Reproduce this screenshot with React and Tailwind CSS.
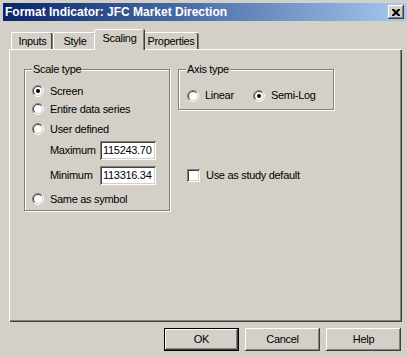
import React from "react";

const raised =
  "shadow-[inset_-1px_-1px_0_#404040,inset_1px_1px_0_#ffffff,inset_-2px_-2px_0_#808080]";
const sunken =
  "shadow-[inset_1px_1px_0_#808080,inset_-1px_-1px_0_#ffffff,inset_2px_2px_0_#404040,inset_-2px_-2px_0_#d4d0c8]";

function Radio({ checked }) {
  return (
    <svg width="12" height="12" viewBox="0 0 12 12" className="shrink-0">
      <circle cx="6" cy="6" r="4.5" fill="#ffffff" />
      <path d="M2.1 9.9 A5.5 5.5 0 0 1 9.9 2.1" fill="none" stroke="#808080" strokeWidth="1" />
      <path d="M9.9 2.1 A5.5 5.5 0 0 1 2.1 9.9" fill="none" stroke="#ffffff" strokeWidth="1" />
      <path d="M2.8 9.2 A4.5 4.5 0 0 1 9.2 2.8" fill="none" stroke="#404040" strokeWidth="1" />
      <path d="M9.2 2.8 A4.5 4.5 0 0 1 2.8 9.2" fill="none" stroke="#d4d0c8" strokeWidth="1" />
      {checked && <circle cx="6" cy="6" r="2" fill="#000000" />}
    </svg>
  );
}

function Option({ checked, label, className = "" }) {
  return (
    <div className={`flex items-center ${className}`}>
      <Radio checked={checked} />
      <span className="ml-[6px]">{label}</span>
    </div>
  );
}

function Group({ label, className = "", children }) {
  return (
    <div
      className={`relative border border-[#808080] shadow-[inset_1px_1px_0_#ffffff,1px_1px_0_#ffffff] ${className}`}
    >
      <span className="absolute left-[7px] top-[-8px] bg-[#d4d0c8] px-[1px] leading-[14px]">
        {label}
      </span>
      {children}
    </div>
  );
}

function Field({ label, value, className = "" }) {
  return (
    <div className={`flex items-center ${className}`}>
      <span className="w-[50px] ml-[25px]">{label}</span>
      <div className={`w-[56px] h-[19px] bg-white pl-[3px] pt-[3px] leading-[13px] ${sunken}`}>
        {value}
      </div>
    </div>
  );
}

function Tab({ label, active, className = "" }) {
  if (active) {
    return (
      <div
        className={`relative z-10 -mx-[2px] h-[21px] mb-[-1px] bg-[#d4d0c8] rounded-t-[2px] border-t border-l border-white shadow-[inset_-1px_0_0_#808080,1px_0_0_#404040] flex items-start justify-center pt-[2px] ${className}`}
      >
        {label}
      </div>
    );
  }
  return (
    <div
      className={`h-[17px] bg-[#d4d0c8] rounded-t-[2px] border-t border-l border-white shadow-[inset_-1px_0_0_#808080,inset_-2px_0_0_#404040] flex items-start justify-center pt-[2px] ${className}`}
    >
      {label}
    </div>
  );
}

function Button({ label, primary }) {
  const inner = (
    <div className={`w-full h-full flex items-center justify-center bg-[#d4d0c8] ${raised}`}>
      {label}
    </div>
  );
  return primary ? (
    <div className="w-[75px] h-[23px] border border-black">{inner}</div>
  ) : (
    <div className="w-[75px] h-[23px]">{inner}</div>
  );
}

export default function App() {
  return (
    <div className="w-[407px] h-[357px] overflow-hidden bg-[#d4d0c8] pl-[3px] pt-[3px] text-[11px] tracking-[-0.3px] text-black font-['Liberation_Sans',Arial,sans-serif] leading-[13px]">
      {/* title bar */}
      <div className="h-[18px] flex items-center bg-gradient-to-r from-[#0a246a] to-[#a6caf0] pl-[2px] pr-[3px]">
        <span className="flex-1 text-white font-bold text-[12px] tracking-normal">
          Format Indicator: JFC Market Direction
        </span>
        <div className={`w-[16px] h-[14px] bg-[#d4d0c8] flex items-center justify-center ${raised}`}>
          <svg width="8" height="7" viewBox="0 0 8 7">
            <path d="M0 0h2l2 2 2-2h2v1l-2.5 2.5L8 6v1H6L4 5 2 7H0V6l2.5-2.5L0 1z" fill="#000000" />
          </svg>
        </div>
      </div>

      {/* tabs */}
      <div className="flex items-end h-[28px] ml-[8px]">
        <Tab label="Inputs" className="w-[42px]" />
        <Tab label="Style" className="w-[43px]" />
        <Tab label="Scaling" active className="w-[50px]" />
        <Tab label="Properties" className="w-[57px]" />
      </div>

      {/* panel */}
      <div className="ml-[6px] w-[392px] h-[272px] border-t border-l border-white shadow-[inset_-1px_-1px_0_#808080,1px_1px_0_#404040] flex items-start pt-[19px] pl-[14px]">
        <Group label="Scale type" className="w-[146px] h-[142px] pt-[13px] pl-[7px]">
          <Option checked label="Screen" className="h-[16px]" />
          <Option label="Entire data series" className="h-[20px]" />
          <Option label="User defined" className="h-[20px]" />
          <Field label="Maximum" value="115243.70" className="h-[23px] -ml-[7px]" />
          <Field label="Minimum" value="113316.34" className="h-[27px] -ml-[7px]" />
          <Option label="Same as symbol" className="h-[20px]" />
        </Group>

        <div className="ml-[8px] flex flex-col">
          <Group label="Axis type" className="w-[156px] h-[41px] pl-[8px] pt-[19px]">
            <div className="flex">
              <Option label="Linear" className="w-[66px]" />
              <Option checked label="Semi-Log" />
            </div>
          </Group>
          <div className="mt-[59px] ml-[9px] flex items-center">
            <div className={`w-[13px] h-[13px] bg-white ${sunken}`} />
            <span className="ml-[6px]">Use as study default</span>
          </div>
        </div>
      </div>

      {/* buttons */}
      <div className="mt-[7px] w-[398px] flex justify-end gap-[6px]">
        <Button label="OK" primary />
        <Button label="Cancel" />
        <Button label="Help" />
      </div>
    </div>
  );
}
